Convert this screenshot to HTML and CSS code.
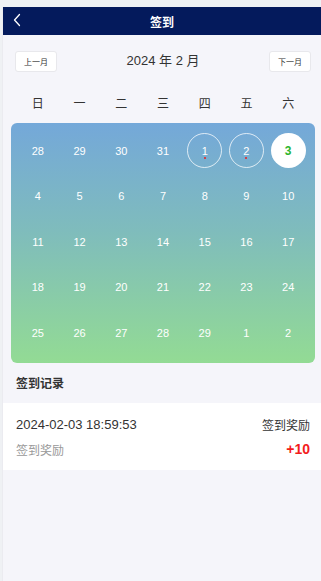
FILE: index.html
```html
<!DOCTYPE html>
<html lang="zh">
<head>
<meta charset="utf-8">
<title>签到</title>
<link rel="stylesheet" href="styles.css">
</head>
<body>
<div class="page">
  <header class="nav">
    <svg class="back" width="10" height="14" viewBox="0 0 10 14"><path d="M7.5 1.5 L2.5 7 L7.5 12.5" fill="none" stroke="#fff" stroke-width="1.3" stroke-linecap="round" stroke-linejoin="round"/></svg>
    <span class="nav-title">签到</span>
  </header>

  <div class="month-bar">
    <button class="mbtn">上一月</button>
    <span class="month">2024 年 2 月</span>
    <button class="mbtn">下一月</button>
  </div>

  <div class="weekdays">
    <span>日</span><span>一</span><span>二</span><span>三</span><span>四</span><span>五</span><span>六</span>
  </div>

  <div class="card">
    <div class="grid">
      <div class="cell"><span class="d">28</span></div>
      <div class="cell"><span class="d">29</span></div>
      <div class="cell"><span class="d">30</span></div>
      <div class="cell"><span class="d">31</span></div>
      <div class="cell"><span class="d ring">1<i class="dot"></i></span></div>
      <div class="cell"><span class="d ring">2<i class="dot"></i></span></div>
      <div class="cell"><span class="d today">3</span></div>
      <div class="cell"><span class="d">4</span></div>
      <div class="cell"><span class="d">5</span></div>
      <div class="cell"><span class="d">6</span></div>
      <div class="cell"><span class="d">7</span></div>
      <div class="cell"><span class="d">8</span></div>
      <div class="cell"><span class="d">9</span></div>
      <div class="cell"><span class="d">10</span></div>
      <div class="cell"><span class="d">11</span></div>
      <div class="cell"><span class="d">12</span></div>
      <div class="cell"><span class="d">13</span></div>
      <div class="cell"><span class="d">14</span></div>
      <div class="cell"><span class="d">15</span></div>
      <div class="cell"><span class="d">16</span></div>
      <div class="cell"><span class="d">17</span></div>
      <div class="cell"><span class="d">18</span></div>
      <div class="cell"><span class="d">19</span></div>
      <div class="cell"><span class="d">20</span></div>
      <div class="cell"><span class="d">21</span></div>
      <div class="cell"><span class="d">22</span></div>
      <div class="cell"><span class="d">23</span></div>
      <div class="cell"><span class="d">24</span></div>
      <div class="cell"><span class="d">25</span></div>
      <div class="cell"><span class="d">26</span></div>
      <div class="cell"><span class="d">27</span></div>
      <div class="cell"><span class="d">28</span></div>
      <div class="cell"><span class="d">29</span></div>
      <div class="cell"><span class="d">1</span></div>
      <div class="cell"><span class="d">2</span></div>
    </div>
  </div>

  <div class="section-title">签到记录</div>

  <div class="record">
    <div class="rec-row">
      <span class="rec-time">2024-02-03 18:59:53</span>
      <span class="rec-type">签到奖励</span>
    </div>
    <div class="rec-row rec-row2">
      <span class="rec-desc">签到奖励</span>
      <span class="rec-points">+10</span>
    </div>
  </div>
</div>
</body>
</html>
```

FILE: styles.css
```css
* { box-sizing: border-box; }
html, body {
  margin: 0;
  padding: 0;
  height: 100%;
}
body {
  background: #eff1f4;
  font-family: "Liberation Sans", "Noto Sans CJK SC", sans-serif;
  color: #333;
  padding-top: 7px;
  padding-left: 2px;
}
.page {
  background: #f5f5fa;
  min-height: 574px;
  border-left: 1px solid #ebebf0;
}
.nav {
  height: 28px;
  background: #041a5c;
  display: flex;
  align-items: center;
  justify-content: center;
  position: relative;
}
.back {
  position: absolute;
  left: 9px;
  top: 6px;
}
.nav-title {
  color: #fff;
  font-size: 12px;
  font-weight: bold;
  font-family: "Noto Sans CJK SC", sans-serif;
}
.month-bar {
  display: flex;
  align-items: center;
  justify-content: space-between;
  padding: 16px 10px 0 12px;
  height: 37px;
}
.mbtn {
  width: 42px;
  height: 21px;
  background: #fff;
  border: 1px solid #e8e8ec;
  border-radius: 3px;
  font-size: 8px;
  color: #333;
  font-family: "Noto Sans CJK SC", sans-serif;
  padding: 0;
}
.month {
  font-size: 13px;
  color: #333;
  margin-top: -4px;
}
.weekdays {
  display: grid;
  grid-template-columns: repeat(7, 1fr);
  margin: 0 6px 0 8px;
  padding: 9px 6px 0 6px;
  height: 51px;
  align-items: center;
  font-size: 12px;
  font-family: "Noto Sans CJK SC", sans-serif;
  color: #333;
  text-align: center;
}
.card {
  margin: 0 6px 0 8px;
  border-radius: 6px;
  background: linear-gradient(180deg, #74a8d9 0%, #7fbcbc 45%, #93db94 100%);
  padding: 5px 6px 8px 6px;
  height: 240px;
}
.grid {
  display: grid;
  grid-template-columns: repeat(7, 1fr);
  grid-auto-rows: 45.5px;
}
.cell {
  display: flex;
  align-items: center;
  justify-content: center;
}
.d {
  width: 35px;
  height: 35px;
  border-radius: 50%;
  display: flex;
  align-items: center;
  justify-content: center;
  color: #fff;
  font-size: 11px;
  position: relative;
}
.ring {
  border: 1px solid rgba(255,255,255,0.75);
}
.dot {
  position: absolute;
  width: 2px;
  height: 2px;
  border-radius: 50%;
  background: #ee1c1c;
  left: 50%;
  margin-left: -1px;
  top: 23px;
}
.today {
  background: #fff;
  color: #2db52d;
  font-size: 12px;
  font-weight: bold;
}
.section-title {
  font-size: 12px;
  font-weight: bold;
  font-family: "Noto Sans CJK SC", sans-serif;
  color: #333;
  padding: 11px 0 0 13px;
  height: 40px;
}
.record {
  background: #fff;
  padding: 12px 11px 0 13px;
  height: 67px;
}
.rec-row {
  display: flex;
  justify-content: space-between;
  align-items: center;
  height: 18px;
}
.rec-time {
  font-size: 13px;
  color: #333;
}
.rec-type {
  font-size: 12px;
  color: #333;
  font-family: "Noto Sans CJK SC", sans-serif;
}
.rec-row2 {
  margin-top: 7px;
}
.rec-desc {
  font-size: 12px;
  color: #999;
  font-family: "Noto Sans CJK SC", sans-serif;
}
.rec-points {
  font-size: 14px;
  color: #f31c1c;
  font-weight: bold;
}
```
